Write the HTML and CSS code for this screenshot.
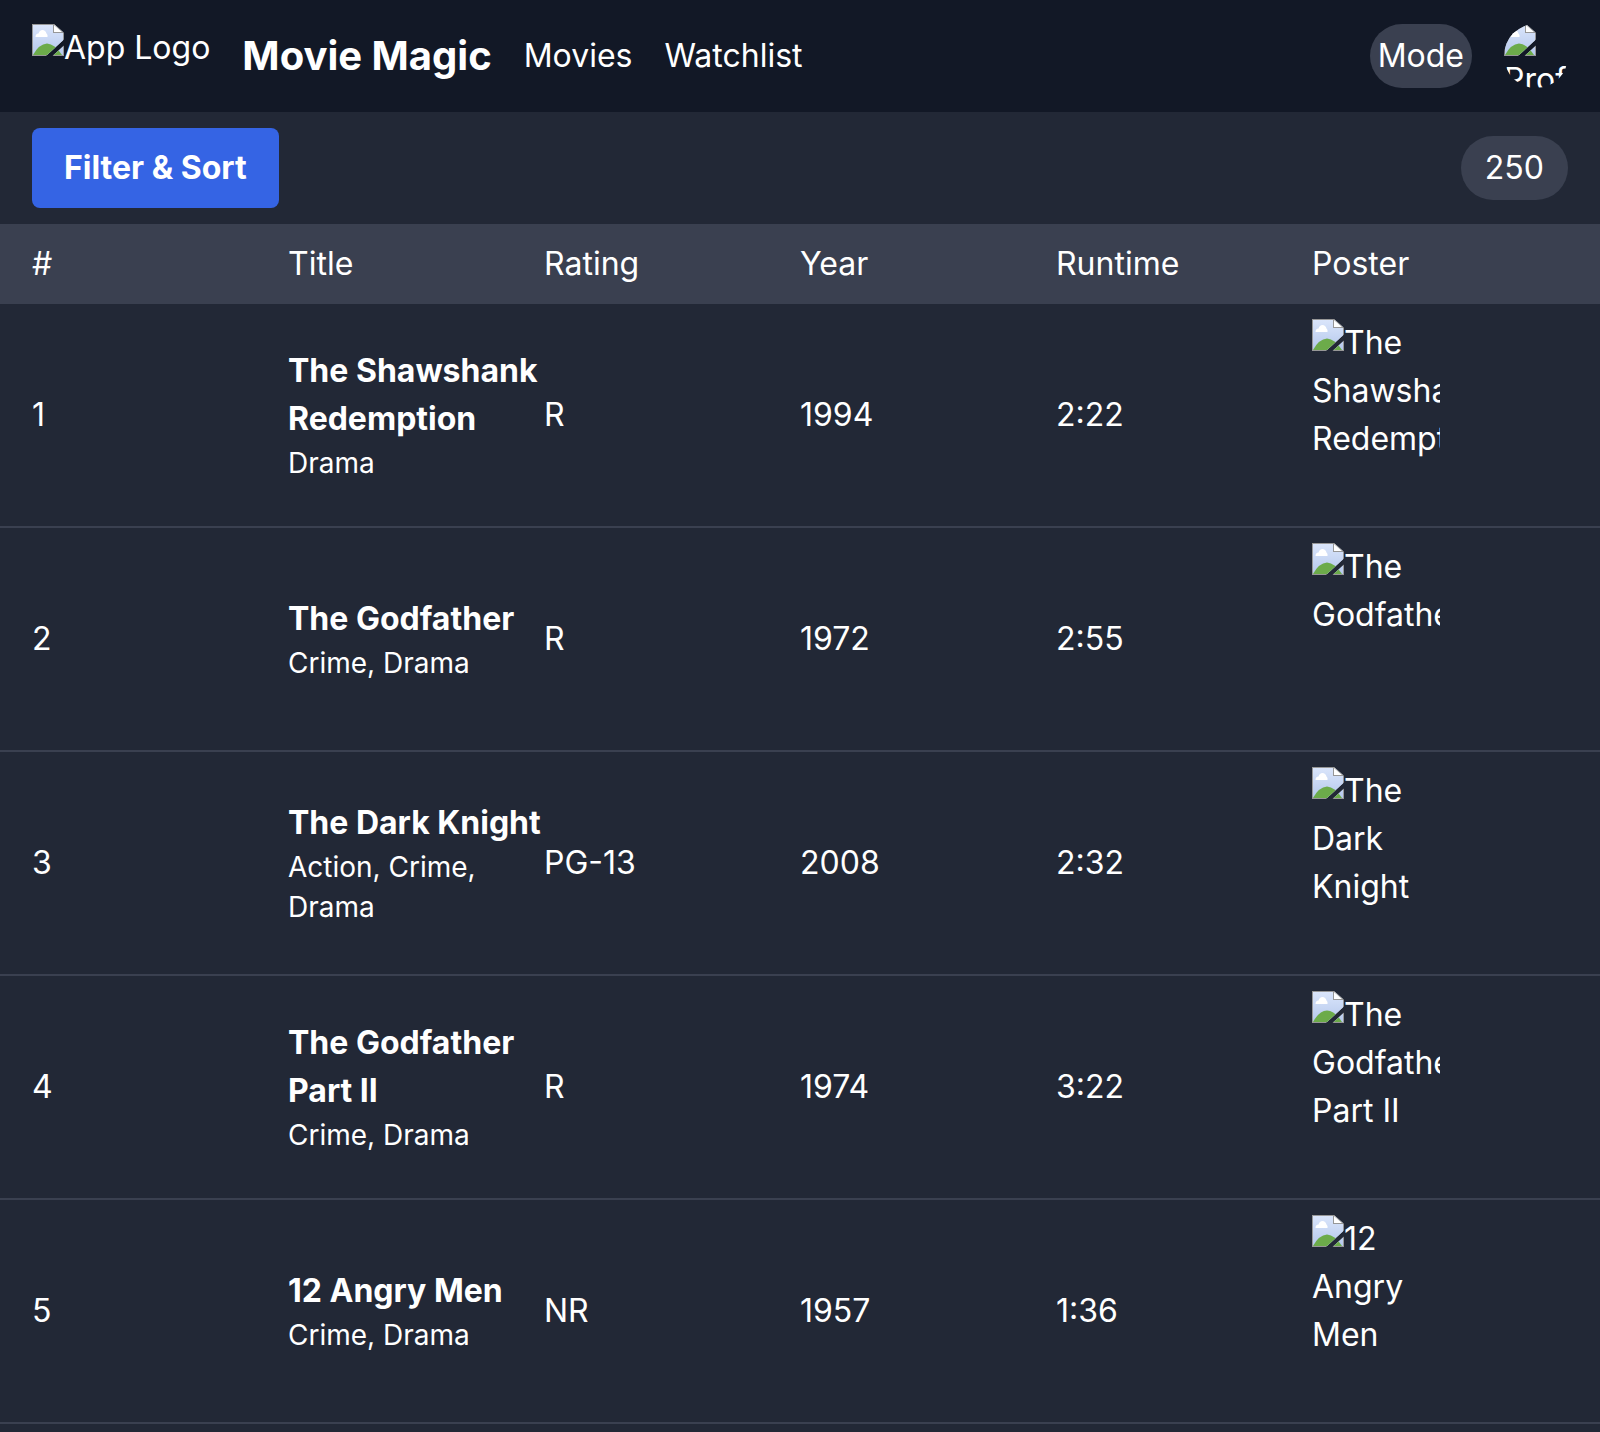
FILE: index.html
```html
<!DOCTYPE html>
<html lang="en">
<head>
<meta charset="utf-8">
<title>Movie Magic</title>
<link rel="stylesheet" href="styles.css">
</head>
<body>
<svg class="sprite" aria-hidden="true">
  <defs>
    <linearGradient id="sky" x1="0" y1="0" x2="0" y2="1">
      <stop offset="0" stop-color="#dae5fb"/>
      <stop offset="1" stop-color="#b5c8ec"/>
    </linearGradient>
    <clipPath id="torn">
      <path d="M0 0H22L32 9V15.500L14 32H0ZM32 21.500V32H20.500Z"/>
    </clipPath>
  </defs>
  <symbol id="missing" viewBox="0 0 32 32">
    <g clip-path="url(#torn)">
      <path d="M0 0H32V32H0Z" fill="#979797"/>
      <path d="M1 1H31V31H1Z" fill="url(#sky)"/>
      <path d="M1 31Q7 20 15 19.500Q23 20 30 31Z" fill="#6cab4a"/>
      <path d="M3.500 13Q3.500 9.500 6.500 9.500Q7.500 6 10.500 6Q13.500 6 14.500 9.500Q16 10.500 15.500 13Z" fill="#fff"/>
      <path d="M21 0H32V9H21Z" fill="#979797"/>
      <path d="M22 1L30 8H22Z" fill="#fff"/>
    </g>
  </symbol>
</svg>
<header class="topbar">
  <div class="brand"><svg class="missing"><use href="#missing"/></svg>App Logo</div>
  <h1 class="name">Movie Magic</h1>
  <nav class="nav"><a href="#movies">Movies</a><a href="#watchlist">Watchlist</a></nav>
  <button class="mode" type="button">Mode</button>
  <div class="avatar"><svg class="missing"><use href="#missing"/></svg>Profile</div>
</header>
<main>
  <div class="toolbar">
    <button class="filter" type="button">Filter &amp; Sort</button>
    <span class="count">250</span>
  </div>
  <table class="movies" id="movies">
    <thead>
      <tr><th>#</th><th>Title</th><th>Rating</th><th>Year</th><th>Runtime</th><th>Poster</th></tr>
    </thead>
    <tbody>
      <tr><td>1</td><td><div class="title">The Shawshank Redemption</div><div class="genres">Drama</div></td><td>R</td><td>1994</td><td>2:22</td><td><div class="poster"><svg class="missing"><use href="#missing"/></svg>The Shawshank Redemption</div></td></tr>
      <tr><td>2</td><td><div class="title">The Godfather</div><div class="genres">Crime, Drama</div></td><td>R</td><td>1972</td><td>2:55</td><td><div class="poster"><svg class="missing"><use href="#missing"/></svg>The Godfather</div></td></tr>
      <tr><td>3</td><td><div class="title">The Dark Knight</div><div class="genres">Action, Crime, Drama</div></td><td>PG-13</td><td>2008</td><td>2:32</td><td><div class="poster"><svg class="missing"><use href="#missing"/></svg>The Dark Knight</div></td></tr>
      <tr><td>4</td><td><div class="title">The Godfather Part II</div><div class="genres">Crime, Drama</div></td><td>R</td><td>1974</td><td>3:22</td><td><div class="poster"><svg class="missing"><use href="#missing"/></svg>The Godfather Part II</div></td></tr>
      <tr><td>5</td><td><div class="title">12 Angry Men</div><div class="genres">Crime, Drama</div></td><td>NR</td><td>1957</td><td>1:36</td><td><div class="poster"><svg class="missing"><use href="#missing"/></svg>12 Angry Men</div></td></tr>
    </tbody>
  </table>
</main>
</body>
</html>
```
FILE: styles.css
```css
* { box-sizing: border-box; }
body {
  margin: 0;
  min-height: 100vh;
  background: #222836;
  color: #fff;
  font: 400 32px/48px Inter, "Liberation Sans", sans-serif;
}
button { border: 0; color: inherit; font: inherit; cursor: pointer; }
a { color: inherit; text-decoration: none; }
.sprite { position: absolute; width: 0; height: 0; }
.missing { width: 32px; height: 32px; vertical-align: top; }

.topbar {
  display: flex;
  align-items: center;
  gap: 32px;
  padding: 24px 32px;
  background: #121826;
}
.brand { height: 64px; white-space: nowrap; }
.name { margin: 0; font-size: 40px; font-weight: 700; line-height: 56px; white-space: nowrap; }
.nav { display: flex; gap: 32px; margin-right: auto; }
.mode { height: 64px; padding: 8px; border-radius: 32px; background: #3a4050; }
.avatar { width: 64px; height: 64px; border-radius: 50%; overflow: hidden; }
.avatar .missing { display: block; }

.toolbar {
  display: flex;
  align-items: center;
  justify-content: space-between;
  padding: 16px 32px;
}
.filter { padding: 16px 32px; border-radius: 8px; background: #3564e4; font-weight: 700; }
.count { padding: 8px 24px; border-radius: 32px; background: #3a4050; }

.movies, .movies thead, .movies tbody { display: block; }
.movies tr {
  display: grid;
  grid-template-columns: repeat(6, minmax(0, 1fr));
  align-items: center;
  padding: 15px 32px;
  border-bottom: 2px solid #3a4050;
}
.movies thead tr { padding: 16px 32px; border-bottom: 0; background: #3a4050; }
.movies th, .movies td { padding: 0; text-align: left; font-weight: 400; }
.title { font-weight: 700; }
.genres { font-size: 28px; line-height: 40px; }
.poster { width: 128px; height: 192px; overflow: hidden; }
```
